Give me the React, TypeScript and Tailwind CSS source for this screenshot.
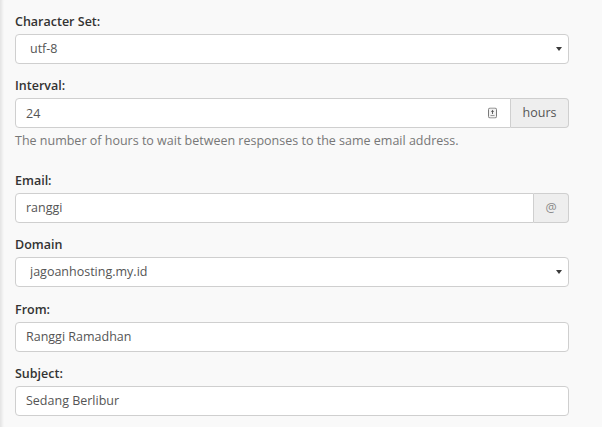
import React from "react";

const font = { fontFamily: '"Open Sans", "Liberation Sans", sans-serif' };

function Label({ children }: { children: React.ReactNode }) {
  return (
    <label className="block mb-[3px] text-[12.5px] leading-[18px] font-semibold text-[#333]">
      {children}
    </label>
  );
}

function Caret() {
  return (
    <svg
      className="absolute right-[7px] top-1/2 -translate-y-1/2 pointer-events-none"
      width="6"
      height="5"
      viewBox="0 0 6 5"
    >
      <path d="M0 0.5h6L3 4.5z" fill="#3a3a3a" />
    </svg>
  );
}

function SpinIcon() {
  return (
    <svg
      className="absolute right-[14px] top-1/2 -translate-y-1/2 pointer-events-none"
      width="9"
      height="11"
      viewBox="0 0 9 11"
    >
      <rect x="0.5" y="0.5" width="8" height="10" rx="1.5" fill="#f2f2f2" stroke="#7a7a7a" />
      <path d="M4.5 2.3L3 4.6h3z" fill="#555" />
      <path d="M4.5 4.6v1.8" stroke="#555" strokeWidth="1" />
      <path d="M2.5 8h4" stroke="#999" strokeWidth="1" />
    </svg>
  );
}

const box =
  "h-[30px] w-full bg-white border border-[#cfcfcf] text-[12.5px] text-[#555] outline-none";

function Select({ value }: { value: string }) {
  return (
    <div className="relative">
      <select
        defaultValue={value}
        style={font}
        className={`${box} rounded-[4px] appearance-none pl-[14px] pr-6`}
      >
        <option>{value}</option>
      </select>
      <Caret />
    </div>
  );
}

function TextInput({ value }: { value: string }) {
  return (
    <input
      readOnly
      value={value}
      style={font}
      className={`${box} rounded-[4px] px-[10px]`}
    />
  );
}

function Group({ children }: { children: React.ReactNode }) {
  return <div>{children}</div>;
}

export default function App() {
  return (
    <div
      style={font}
      className="w-[602px] h-[427px] overflow-hidden bg-[#f9f9f9] pl-[15px] pr-[33px] pt-[13px] shadow-[inset_4px_0_3px_-2px_rgba(0,0,0,0.09)]"
    >
      <div className="flex flex-col gap-[13.3px]">
        <Group>
          <Label>Character Set:</Label>
          <Select value="utf-8" />
        </Group>

        <Group>
          <Label>Interval:</Label>
          <div className="flex">
            <div className="relative flex-1">
              <input
                readOnly
                value="24"
                style={font}
                className={`${box} rounded-l-[4px] px-[10px]`}
              />
              <SpinIcon />
            </div>
            <span className="h-[30px] w-[58px] flex items-center justify-center bg-[#eeeeee] border border-l-0 border-[#cfcfcf] rounded-r-[4px] text-[12.5px] text-[#555]">
              hours
            </span>
          </div>
          <p className="mt-[4px] mb-[8.4px] text-[12.5px] leading-[18px] text-[#777]">
            The number of hours to wait between responses to the same email address.
          </p>
        </Group>

        <Group>
          <Label>Email:</Label>
          <div className="flex">
            <input
              readOnly
              value="ranggi"
              style={font}
              className={`${box} flex-1 rounded-l-[4px] px-[10px]`}
            />
            <span className="h-[30px] w-[35px] flex items-center justify-center bg-[#eeeeee] border border-l-0 border-[#cfcfcf] rounded-r-[4px] text-[12.5px] text-[#8a8a8a]">
              @
            </span>
          </div>
        </Group>

        <Group>
          <Label>Domain</Label>
          <Select value="jagoanhosting.my.id" />
        </Group>

        <Group>
          <Label>From:</Label>
          <TextInput value="Ranggi Ramadhan" />
        </Group>

        <Group>
          <Label>Subject:</Label>
          <TextInput value="Sedang Berlibur" />
        </Group>
      </div>
    </div>
  );
}
